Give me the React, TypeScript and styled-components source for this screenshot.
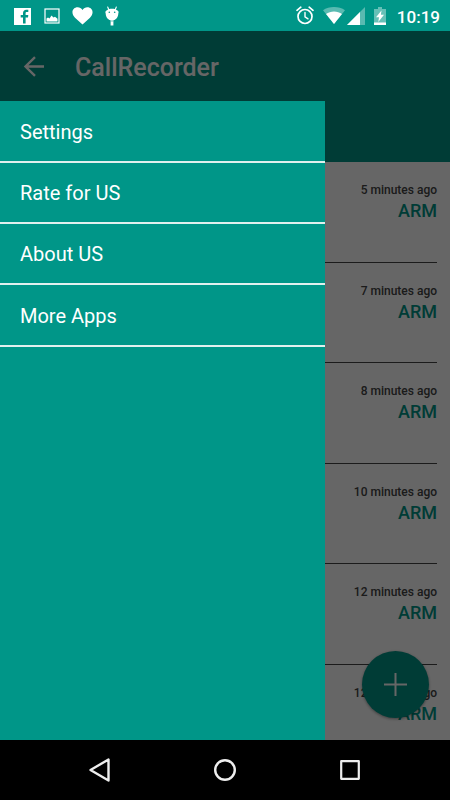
import React from 'react';
import styled, { createGlobalStyle } from 'styled-components';

const teal = '#009688';

const GlobalStyle = createGlobalStyle`
  *, *::before, *::after { box-sizing: border-box; }
  body { margin: 0; background: #000; font-family: Roboto, "Liberation Sans", sans-serif; }
  button { border: 0; padding: 0; background: none; font: inherit; color: inherit; cursor: pointer; }
  svg { display: block; flex: none; }
`;

const Screen = styled.div`
  display: flex;
  flex-direction: column;
  height: 100vh;
  overflow: hidden;
`;

const StatusBar = styled.div`
  flex: none;
  display: flex;
  align-items: center;
  justify-content: space-between;
  height: 31px;
  padding: 0 10px 0 13px;
  background: ${teal};
  color: #fff;
`;

const StatusGroup = styled.div<{ $gap: number }>`
  display: flex;
  align-items: center;
  gap: ${({ $gap }) => $gap}px;
`;

const Clock = styled.time`
  font-size: 17px;
  font-weight: 500;
  line-height: 20px;
  padding: 2px 0 0 2px;
`;

const Stage = styled.div`
  position: relative;
  flex: 1;
  min-height: 0;
  overflow: hidden;
  background: #fff;
`;

const Header = styled.header`
  height: 131px;
  background: ${teal};
  color: #fff;
`;

const Toolbar = styled.div`
  display: flex;
  align-items: center;
  gap: 29px;
  height: 70px;
  padding: 2px 22px 0;
`;

const Title = styled.h1`
  margin: 0;
  padding-top: 2px;
  font-size: 25px;
  line-height: 30px;
  font-weight: 500;
`;

const CallList = styled.ul`
  margin: 0;
  padding: 0 13px;
  list-style: none;
`;

const CallRow = styled.li`
  display: flex;
  flex-direction: column;
  align-items: flex-end;
  height: 100px;
  padding-top: 19px;
  border-bottom: 1px solid #444;

  &:nth-child(odd) { height: 101px; }
`;

const CallTime = styled.span`
  font-size: 12px;
  line-height: 18px;
  font-weight: 500;
  color: #444;
`;

const CallName = styled.span`
  font-size: 18px;
  line-height: 24px;
  font-weight: 500;
  color: ${teal};
`;

const AddButton = styled.button`
  position: absolute;
  right: 21px;
  bottom: 22px;
  display: flex;
  align-items: center;
  justify-content: center;
  width: 67px;
  height: 67px;
  border-radius: 50%;
  background: ${teal};
  color: #fff;
  box-shadow: 0 1px 3px rgba(0, 0, 0, 0.4);
`;

const Scrim = styled.div`
  position: absolute;
  inset: 0;
  background: rgba(0, 0, 0, 0.6);
`;

const Drawer = styled.nav`
  position: absolute;
  top: 70px;
  bottom: 0;
  left: 0;
  width: calc(100% - 125px);
  background: ${teal};
`;

const DrawerItem = styled.button`
  display: block;
  width: 100%;
  height: 61px;
  padding: 1px 20px 0;
  border-bottom: 2px solid #e0f0ee;
  font-size: 20px;
  line-height: 24px;
  text-align: left;
  color: #fff;

  &:first-child, &:last-child { height: 62px; }
`;

const NavBar = styled.nav`
  flex: none;
  display: flex;
  align-items: center;
  justify-content: center;
  gap: 85px;
  height: 60px;
  background: #000;
  color: #eee;
`;

const NavButton = styled.button`
  width: 40px;
  height: 40px;
  display: flex;
  align-items: center;
  justify-content: center;
`;

const calls = [
  '5 minutes ago',
  '7 minutes ago',
  '8 minutes ago',
  '10 minutes ago',
  '12 minutes ago',
  '12 minutes ago',
];

const menu = ['Settings', 'Rate for US', 'About US', 'More Apps'];

const FacebookIcon = () => (
  <svg width="19" height="18" viewBox="0 0 19 18">
    <rect x="1" y="1" width="17" height="17" fill="#fff" />
    <path fill={teal} d="M10 16.500v-6H7.700V8H10V6.300C10 4 11.300 2.800 13.300 2.800H15.300v2.300h-1.400c-1 0-1.300.5-1.300 1.300V8h2.700l-.3 2.500h-2.400v6z" />
  </svg>
);

const PictureIcon = () => (
  <svg width="16" height="16" viewBox="0 0 16 16">
    <rect x="1" y="1" width="14" height="14" fill="none" stroke="#fff" strokeWidth="1.200" />
    <path fill="#fff" d="M2.500 13.500v-3L4 9.500l1.500 1L7.500 7.500l2 2 1.500-.7 2.500 2v2.700z" />
  </svg>
);

const HeartIcon = () => (
  <svg width="21" height="18" viewBox="0 0 21 18">
    <path fill="#fff" d="M10.500 17.500 3 10.700C-1.800 6 .8.300 5.600.3c2.100 0 3.700 1 4.900 2.700C11.700 1.300 13.300.3 15.400.3c4.800 0 7.400 5.700 2.600 10.400z" />
  </svg>
);

const DroidIcon = () => (
  <svg width="14" height="20" viewBox="0 0 14 20">
    <path stroke="#fff" strokeWidth="1.100" strokeLinecap="round" d="m2.700 1 1 2.500M11.300 1l-1 2.500" />
    <path fill="#fff" d="M2 4.200C3.200 3.200 5 2.800 7 2.800s3.800.4 5 1.400c1.500.3 2 1.800 1.300 3.200-.1 4-2.700 6.900-6.300 6.900S.8 11.400.7 7.400C0 6 .5 4.500 2 4.200zM5.600 14h2.800v5.500H5.600z" />
    <circle cx="4.300" cy="6.300" r=".8" fill={teal} />
    <circle cx="9.700" cy="6.300" r=".8" fill={teal} />
    <path stroke={teal} strokeWidth=".6" d="M5.600 15h2.800" />
  </svg>
);

const AlarmIcon = () => (
  <svg width="18" height="19" viewBox="0 0 18 19" fill="none" stroke="#fff" strokeLinecap="round">
    <circle cx="9" cy="10.500" r="7" strokeWidth="1.700" />
    <path strokeWidth="1.700" d="M1 4.300 4.800 1.200M17 4.300l-3.800-3.100" />
    <path strokeWidth="1.400" d="M9 6.500v4.300l3 2" />
  </svg>
);

const WifiIcon = () => (
  <svg width="22" height="17" viewBox="0 0 22 17">
    <path fill="#fff" fillOpacity=".35" d="M11 17 0 3.300C6-1.100 16-1.100 22 3.300z" />
    <path fill="#fff" d="M11 17 3 7c4.500-3.500 11.500-3.500 16 0z" />
  </svg>
);

const SignalIcon = () => (
  <svg width="18" height="18" viewBox="0 0 18 18">
    <path fill="#fff" fillOpacity=".35" d="M0 18 18 0v18z" />
    <path fill="#fff" d="M0 18 13 5v13z" />
  </svg>
);

const BatteryIcon = () => (
  <svg width="12" height="18" viewBox="0 0 12 18">
    <path fill="#fff" fillOpacity=".4" d="M4 0h4v2h4v16H0V2h4z" />
    <path fill="#fff" d="M0 15.500h12V18H0zM7.500 3.500 2 10.300h3L4.300 15l5.700-7.200H6.900z" />
  </svg>
);

export default function App() {
  return (
    <Screen>
      <GlobalStyle />
      <StatusBar>
        <StatusGroup $gap={12}>
          <FacebookIcon />
          <PictureIcon />
          <HeartIcon />
          <DroidIcon />
        </StatusGroup>
        <StatusGroup $gap={9}>
          <AlarmIcon />
          <StatusGroup $gap={2}>
            <WifiIcon />
            <SignalIcon />
          </StatusGroup>
          <StatusGroup $gap={9}>
            <BatteryIcon />
            <Clock>10:19</Clock>
          </StatusGroup>
        </StatusGroup>
      </StatusBar>

      <Stage>
        <Header>
          <Toolbar>
            <button aria-label="Back">
              <svg width="24" height="24" viewBox="0 0 24 24" fill="none" stroke="currentColor" strokeWidth="2.400">
                <path d="M22 11.500H3.500M13 2.200 3.500 11.500l9.500 9.300" />
              </svg>
            </button>
            <Title>CallRecorder</Title>
          </Toolbar>
        </Header>
        <CallList>
          {calls.map((time, index) => (
            <CallRow key={index}>
              <CallTime>{time}</CallTime>
              <CallName>ARM</CallName>
            </CallRow>
          ))}
        </CallList>
        <AddButton aria-label="Add">
          <svg width="23" height="23" viewBox="0 0 23 23" stroke="currentColor" strokeWidth="2">
            <path d="M11.500 0v23M0 11.500h23" />
          </svg>
        </AddButton>
        <Scrim />
        <Drawer aria-label="Menu">
          {menu.map((label) => (
            <DrawerItem key={label}>{label}</DrawerItem>
          ))}
        </Drawer>
      </Stage>

      <NavBar aria-label="System">
        <NavButton aria-label="Back">
          <svg width="24" height="26" viewBox="0 0 24 26" fill="none" stroke="currentColor" strokeWidth="2.400" strokeLinejoin="round">
            <path d="M20.500 2.500v21L2.500 13z" />
          </svg>
        </NavButton>
        <NavButton aria-label="Home">
          <svg width="24" height="24" viewBox="0 0 24 24" fill="none" stroke="currentColor" strokeWidth="2.400">
            <circle cx="12" cy="12" r="9.800" />
          </svg>
        </NavButton>
        <NavButton aria-label="Recent apps">
          <svg width="20" height="20" viewBox="0 0 20 20" fill="none" stroke="currentColor" strokeWidth="2.200" strokeLinejoin="round">
            <rect x="1.200" y="1.200" width="17.600" height="17.600" />
          </svg>
        </NavButton>
      </NavBar>
    </Screen>
  );
}
